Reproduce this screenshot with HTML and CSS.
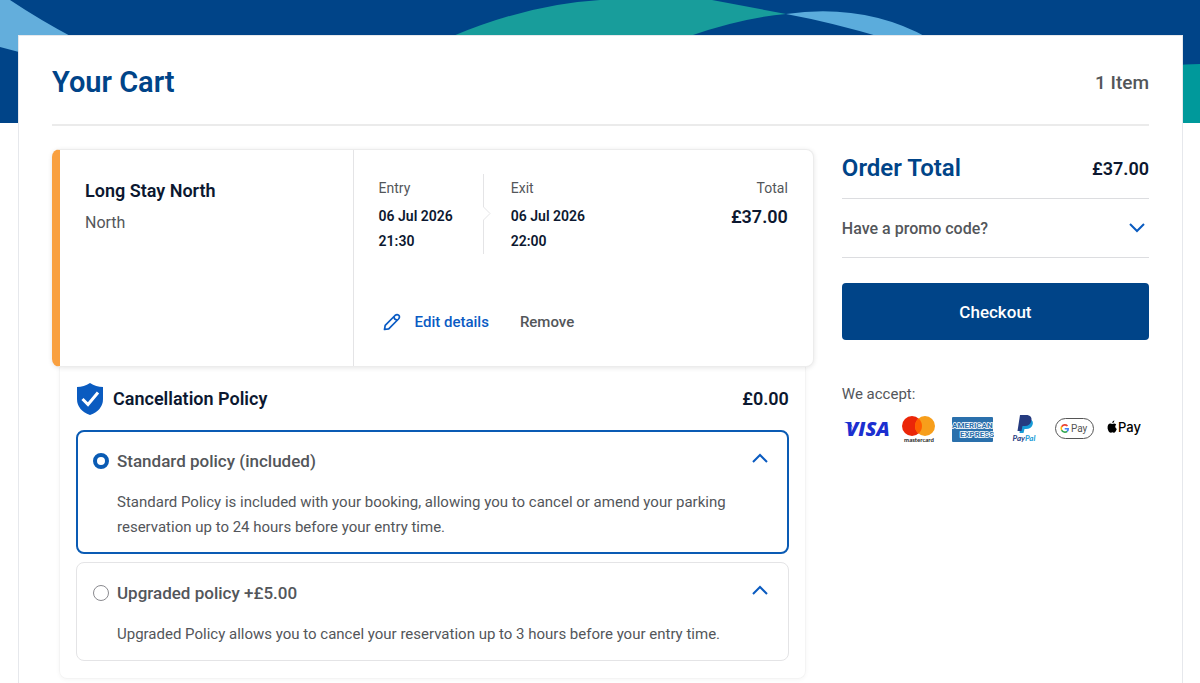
FILE: index.html
```
<!DOCTYPE html>
<html lang="en">
<head>
  <meta charset="UTF-8">
  <meta name="viewport" content="width=device-width, initial-scale=1.0">
  <title>Your Cart</title>
  <link rel="stylesheet" href="styles.css">
</head>
<body>
  <div class="hero">
    <svg viewBox="0 0 1200 123" preserveAspectRatio="none" aria-hidden="true">
      <path fill="#63aedc" d="M0 0H10Q40 20 74 38L90 62Q40 59 0 47Z" />
      <path fill="#189d9b" d="M453 36Q530 4 600 0H712L786 14Q742 18 690 36Z" />
      <path fill="#5bacdc" d="M786 14Q865 3 928 38H884Q830 22 786 14Z" />
      <path fill="#00999b" d="M1170 66Q1185 64 1200 64V123H1170Z" />
    </svg>
  </div>

  <main class="cart">
    <header class="cart-header">
      <h1>Your Cart</h1>
      <span class="item-count">1 Item</span>
    </header>

    <div class="cart-content">
      <section class="items">
        <article class="product">
          <div class="product-info">
            <h2>Long Stay North</h2>
            <p>North</p>
          </div>
          <div class="product-details">
            <div class="dates">
              <div class="date">
                <span class="label">Entry</span>
                <strong>06 Jul 2026</strong>
                <strong>21:30</strong>
              </div>
              <svg class="date-divider" width="8" height="80" viewBox="0 0 8 80" fill="none" stroke="#e4e4e6" aria-hidden="true">
                <path d="M.5 0V33L7 39.500L.5 46V80" />
              </svg>
              <div class="date">
                <span class="label">Exit</span>
                <strong>06 Jul 2026</strong>
                <strong>22:00</strong>
              </div>
              <div class="date total">
                <span class="label">Total</span>
                <strong class="price">£37.00</strong>
              </div>
            </div>
            <div class="actions">
              <button type="button" class="edit">
                <svg width="18" height="18" viewBox="0 0 18 18" fill="none" stroke="#0a5bc4" stroke-width="1.700" stroke-linejoin="round" aria-hidden="true">
                  <path d="M1.500 16.500L2.200 12.300L12 2.500Q14 .8 15.800 2.300Q17.200 4 15.500 6L5.700 15.800Z" />
                  <path d="M10.800 3.700Q11.200 6.800 14.300 7.200" />
                </svg>
                Edit details
              </button>
              <button type="button" class="remove">Remove</button>
            </div>
          </div>
        </article>

        <div class="policy">
          <div class="policy-header">
            <svg width="28" height="34" viewBox="0 0 28 34" aria-hidden="true">
              <path fill="#0a5bc0" d="M14 1Q20 5 27 5V17Q27 28 14 33Q1 28 1 17V5Q8 5 14 1Z" />
              <path fill="none" stroke="#fff" stroke-width="3" d="M6.500 17L12 22.500L22 10.500" />
            </svg>
            <h2>Cancellation Policy</h2>
            <strong class="price">£0.00</strong>
          </div>

          <div class="option selected">
            <div class="option-title">
              <input type="radio" name="policy" id="standard" checked>
              <label for="standard">Standard policy (included)</label>
              <button type="button" class="toggle" aria-label="Hide standard policy">
                <svg width="16" height="10" viewBox="0 0 16 10" aria-hidden="true"><path d="M1 9L8 2L15 9" /></svg>
              </button>
            </div>
            <p>Standard Policy is included with your booking, allowing you to cancel or amend your parking reservation up to 24 hours before your entry time.</p>
          </div>

          <div class="option">
            <div class="option-title">
              <input type="radio" name="policy" id="upgraded">
              <label for="upgraded">Upgraded policy +£5.00</label>
              <button type="button" class="toggle" aria-label="Hide upgraded policy">
                <svg width="16" height="10" viewBox="0 0 16 10" aria-hidden="true"><path d="M1 9L8 2L15 9" /></svg>
              </button>
            </div>
            <p>Upgraded Policy allows you to cancel your reservation up to 3 hours before your entry time.</p>
          </div>
        </div>
      </section>

      <aside class="summary">
        <div class="order-total">
          <h2>Order Total</h2>
          <strong class="price">£37.00</strong>
        </div>
        <button type="button" class="promo">
          Have a promo code?
          <svg width="16" height="10" viewBox="0 0 16 10" aria-hidden="true"><path d="M1 1L8 8L15 1" /></svg>
        </button>
        <button type="button" class="checkout">Checkout</button>

        <p class="accept">We accept:</p>
        <div class="payments">
          <svg width="46" height="30" viewBox="0 0 46 30" role="img" aria-label="Visa">
            <text x="2" y="22" font-size="20" font-weight="800" font-style="italic" font-family="Open Sans, sans-serif" fill="#1c2fd0">VISA</text>
            <path fill="#1c2fd0" d="M0 8H6L9 14Q6 10 0 8Z" />
          </svg>
          <svg width="34" height="30" viewBox="0 0 34 30" role="img" aria-label="Mastercard">
            <circle cx="10" cy="12" r="10" fill="#eb2608" />
            <circle cx="23" cy="12" r="10" fill="#f79e1b" />
            <path fill="#ff5f00" d="M16.500 4.400A10 10 0 0 1 16.500 19.600A10 10 0 0 1 16.500 4.400Z" />
            <text x="17" y="28" text-anchor="middle" font-size="6" font-weight="700" font-family="Lato, sans-serif" fill="#222">mastercard</text>
          </svg>
          <svg width="46" height="30" viewBox="0 0 46 30" role="img" aria-label="American Express">
            <rect x="4" y="3" width="41" height="25" rx="1" fill="#2a70ac" />
            <g font-size="8" font-weight="700" font-family="Roboto, sans-serif" fill="#2a70ac" stroke="#fff" stroke-width="1.500" paint-order="stroke">
              <text x="4" y="14">AMERICAN</text>
              <text x="12" y="23">EXPRESS</text>
            </g>
          </svg>
          <svg width="36" height="30" viewBox="0 0 36 30" role="img" aria-label="PayPal">
            <path fill="#179bd7" d="M15 5H24Q28 7 26.500 11Q25 15 20 15H18.500L17.500 19H13.500Z" />
            <path fill="#253b80" d="M14 1H21.500Q26 2 25.500 6Q24.500 12 18.500 12H16.500L15.500 17H11.500Z" />
            <text x="18" y="27" text-anchor="middle" font-size="8" font-weight="700" font-style="italic" font-family="Lato, sans-serif" fill="#253b80">Pay<tspan fill="#179bd7">Pal</tspan></text>
          </svg>
          <svg width="41" height="30" viewBox="0 0 41 30" role="img" aria-label="Google Pay">
            <rect x="1.500" y="4.500" width="38" height="20" rx="10" fill="#fff" stroke="#555" />
            <g fill="none" stroke-width="1.600">
              <path stroke="#ea4335" d="M13.500 12A3.700 3.700 0 0 0 7.600 12.800" />
              <path stroke="#fbbc04" d="M7.600 12.600A3.700 3.700 0 0 0 7.600 16.200" />
              <path stroke="#34a853" d="M7.600 16.200A3.700 3.700 0 0 0 13.200 17.300" />
              <path stroke="#4285f4" d="M13.200 17.300Q14.300 16.300 14.200 14.800H10.700" />
            </g>
            <text x="17" y="18" font-size="10" font-family="Roboto, sans-serif" fill="#555">Pay</text>
          </svg>
          <svg width="34" height="30" viewBox="0 0 34 30" role="img" aria-label="Apple Pay">
            <path d="M5.500 10Q7.500 8.800 9.200 10.500Q7 12.800 9.800 15Q8.500 18.800 6.800 18.700Q5.400 18 4 18.700Q1.500 18.700 .6 14.500Q.3 10 3 9.500Q4 9.400 5.500 10Z" />
            <path d="M5.200 9.300Q5 7.200 7.300 6.200Q7.600 8.500 5.200 9.300Z" />
            <text x="11" y="18" font-size="13" font-weight="500" font-family="Inter, sans-serif">Pay</text>
          </svg>
        </div>
      </aside>
    </div>
  </main>
</body>
</html>
```
FILE: styles.css
```
* {
  box-sizing: border-box;
}
body {
  margin: 0;
  background-color: white;
  color: #53565a;
  font-family: Roboto, sans-serif;
  font-size: 15px;
  overflow-x: hidden;
}
h1,
h2,
p {
  margin: 0;
}
button {
  padding: 0;
  border: none;
  background: none;
  color: inherit;
  font: inherit;
  font-weight: 500;
  cursor: pointer;
}
.hero {
  position: absolute;
  top: 0;
  left: 0;
  width: 100%;
  height: 123px;
  background-color: #004488;
}
.hero svg {
  display: block;
  width: 100%;
  height: 100%;
}
.cart {
  position: relative;
  margin: 35px 17px 0 18px;
  padding: 0 33px 32px;
  border: 1px solid #e6e8ec;
  background-color: white;
}
.cart-header {
  display: flex;
  align-items: center;
  justify-content: space-between;
  height: 90px;
  padding-top: 4px;
  border-bottom: 2px solid #ebebeb;
}
h1 {
  color: #004488;
  font-size: 29px;
  font-weight: 600;
}
.item-count {
  font-size: 19px;
  font-weight: 500;
}
.cart-content {
  display: grid;
  grid-template-columns: 1fr 28%;
  gap: 28px;
  align-items: start;
  padding-top: 23px;
}
.product {
  position: relative;
  display: flex;
  border: 1px solid #ececec;
  border-left: 8px solid #f9a040;
  border-radius: 8px;
  background-color: white;
  box-shadow: 0 1px 5px rgba(0, 0, 0, 0.1);
}
.product-info {
  flex: 0 0 39%;
  padding: 27px 25px;
  border-right: 1px solid #e4e4e6;
}
.product-info h2,
.policy-header h2 {
  color: #0c1830;
  font-size: 18px;
  font-weight: 600;
  line-height: 28px;
}
.product-info p {
  margin-top: 4px;
  font-size: 16px;
  line-height: 28px;
}
.product-details {
  flex: 1;
  padding: 24px 25px 28px;
}
.dates {
  display: flex;
}
.date {
  display: flex;
  flex-direction: column;
}
.date .label {
  margin-bottom: 2px;
  font-size: 14px;
  line-height: 28px;
}
.date strong {
  color: #0c1830;
  font-size: 14px;
  font-weight: 600;
  line-height: 25px;
}
.date-divider {
  margin: 0 20px 0 30px;
}
.date.total {
  margin-left: auto;
  text-align: right;
}
.date .price,
.price {
  color: #0c1830;
  font-size: 18px;
  font-weight: 600;
}
.actions {
  display: flex;
  align-items: center;
  gap: 31px;
  height: 32px;
  margin-top: 52px;
}
.edit {
  display: flex;
  align-items: center;
  gap: 14px;
  padding-left: 4px;
  color: #0a5bc4;
}
.policy {
  margin: 0 8px 0 7px;
  padding: 0 16px 17px;
  border: 1px solid #f4f4f4;
  border-top: none;
  border-radius: 0 0 8px 8px;
  box-shadow: 0 1px 4px rgba(0, 0, 0, 0.04);
}
.policy-header {
  display: flex;
  align-items: center;
  height: 63px;
}
.policy-header h2 {
  margin-left: 9px;
}
.policy-header .price {
  margin-left: auto;
}
.option {
  padding: 16px 20px 13px 16px;
  border: 1px solid #e4e4e6;
  border-radius: 8px;
}
.option + .option {
  margin-top: 8px;
}
.option.selected {
  padding: 15px 19px 12px 15px;
  border: 2px solid #0a5bb4;
}
.option-title {
  display: flex;
  align-items: center;
  height: 28px;
}
.option-title label {
  font-size: 17px;
  font-weight: 500;
}
.option input {
  width: 16px;
  height: 16px;
  margin: 0 8px 0 0;
  border: 1px solid #8a8a8f;
  border-radius: 50%;
  background-color: white;
  appearance: none;
}
.option input:checked {
  border: 4px solid #0a5bb4;
}
.toggle {
  margin-left: auto;
  padding-bottom: 6px;
}
.toggle svg,
.promo svg {
  display: block;
  fill: none;
  stroke: #0a5bc0;
  stroke-width: 2;
}
.option p {
  margin: 15px 40px 0 24px;
  line-height: 25px;
}
.order-total {
  display: flex;
  align-items: center;
  justify-content: space-between;
  height: 50px;
  padding-bottom: 11px;
  border-bottom: 1px solid #dcdde0;
}
.order-total h2 {
  color: #004488;
  font-size: 24px;
  font-weight: 600;
}
.promo {
  display: flex;
  align-items: center;
  justify-content: space-between;
  width: 100%;
  height: 59px;
  padding-right: 4px;
  border-bottom: 1px solid #dcdde0;
  font-size: 16px;
}
.checkout {
  width: 100%;
  height: 57px;
  margin-top: 25px;
  border-radius: 4px;
  background-color: #004488;
  color: white;
  font-size: 17px;
}
.accept {
  margin-top: 42px;
  line-height: 24px;
}
.payments {
  display: flex;
  gap: 12px;
  margin: 8px 0 0 2px;
}
```
